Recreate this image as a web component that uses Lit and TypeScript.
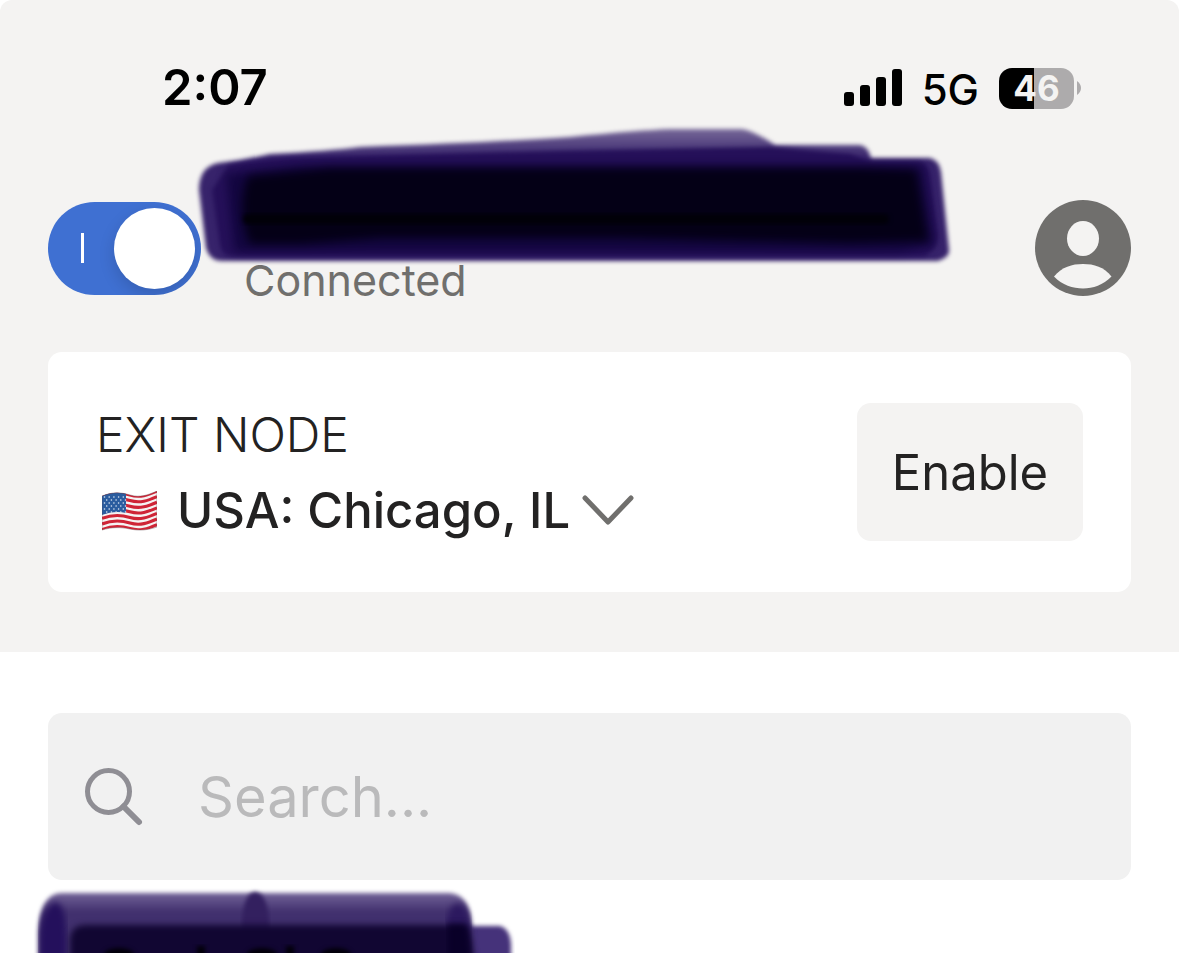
import { LitElement, html, css, svg } from "lit";
import { customElement } from "lit/decorators.js";

/** Status bar: clock, signal, network, battery. */
@customElement("status-bar")
class StatusBar extends LitElement {
  static styles = css`
    :host {
      display: flex;
      align-items: center;
      justify-content: space-between;
      height: 56px;
      padding: 0 98px 0 162px;
      color: #000;
    }
    .time { font-size: 49px; font-weight: 600; line-height: 56px; }
    .right { display: flex; align-items: center; }
    .signal { display: block; margin-right: 20px; }
    .net { font-size: 42px; font-weight: 500; line-height: 56px; margin-right: 20px; padding-top: 4px; }
    .battery { display: flex; align-items: center; gap: 3px; }
    .cell {
      width: 75px;
      height: 41px;
      border-radius: 13px;
      background: linear-gradient(to right, #000 47%, #adabac 47%);
      color: #f4f3f2;
      font-size: 35px;
      font-weight: 700;
      line-height: 41px;
      text-align: center;
    }
    .tip { display: block; }
  `;
  render() {
    return html`
      <span class="time">2:07</span>
      <div class="right">
        <svg class="signal" width="58" height="38" viewBox="0 0 58 38" aria-label="Signal">
          <rect x="0" y="23" width="10" height="14" rx="3"></rect>
          <rect x="16" y="16" width="10" height="21" rx="3"></rect>
          <rect x="32" y="8" width="10" height="29" rx="3"></rect>
          <rect x="48" y="0" width="10" height="37" rx="3"></rect>
        </svg>
        <span class="net">5G</span>
        <div class="battery">
          <div class="cell">46</div>
          <svg class="tip" width="4" height="14" viewBox="0 0 4 14"><path d="M0 0Q4 3 4 7T0 14Z" fill="#adabac"></path></svg>
        </div>
      </div>
    `;
  }
}

const stripes = [0, 1, 2, 3, 4, 5, 6];
const starRows = [0, 1, 2, 3, 4, 5];
const starCols = [0, 1, 2, 3, 4];

@customElement("app-root")
class AppRoot extends LitElement {
  static styles = css`
    :host {
      display: block;
      min-height: 100vh;
      background: #fff;
      color: #232222;
      font-family: Inter, "Liberation Sans", sans-serif;
    }
    * { box-sizing: border-box; }
    .header {
      background: #f4f3f2;
      border-radius: 12px 12px 0 0;
      padding: 60px 48px;
    }
    .status { margin: 0 -48px; }
    .account {
      position: relative;
      display: flex;
      align-items: center;
      gap: 43px;
      margin-top: 84px;
      height: 96px;
    }
    .toggle {
      appearance: none;
      flex: none;
      display: flex;
      align-items: center;
      justify-content: space-between;
      width: 153px;
      height: 93px;
      margin: 0;
      padding: 0 6px 0 33px;
      border-radius: 47px;
      background: #3f70d2;
      overflow: hidden;
    }
    .toggle::before { content: ""; width: 3px; height: 30px; background: #fff; }
    .toggle::after {
      content: "";
      width: 81px;
      height: 81px;
      border-radius: 50%;
      background: #fff;
      box-shadow: 0 6px 16px rgba(0, 0, 0, 0.15);
    }
    .state {
      flex: 1;
      align-self: flex-end;
      font-size: 43px;
      line-height: 48px;
      color: #706f6d;
      margin-bottom: -8px;
    }
    .scribble { position: absolute; left: 142px; top: -80px; }
    .avatar {
      flex: none;
      display: block;
      padding: 0;
      border: 0;
      background: none;
    }
    .avatar svg { display: block; }
    .card {
      display: flex;
      align-items: center;
      justify-content: space-between;
      margin-top: 56px;
      padding: 51px 48px;
      border-radius: 14px;
      background: #fff;
    }
    .title { display: block; font-size: 48px; font-weight: 300; line-height: 64px; }
    .picker { display: flex; align-items: center; height: 74px; padding-top: 13px; }
    .flag { display: block; margin: 0 20px 0 6px; }
    .location {
      appearance: none;
      margin: 0;
      padding: 0;
      border: 0;
      background: none;
      color: inherit;
      font-family: inherit;
      font-size: 49px;
      font-weight: 500;
      line-height: 61px;
    }
    .chevron { display: block; margin-left: 11px; pointer-events: none; }
    .enable {
      width: 226px;
      height: 138px;
      padding: 0;
      border: 0;
      border-radius: 14px;
      background: #f4f3f2;
      color: inherit;
      font-family: inherit;
      font-size: 49px;
    }
    .main { padding: 61px 48px 0; }
    .search {
      display: flex;
      align-items: center;
      gap: 54px;
      height: 167px;
      padding: 0 36px;
      border-radius: 14px;
      background: #f1f1f1;
    }
    .search svg { display: block; flex: none; }
    .query {
      flex: 1;
      min-width: 0;
      padding: 0;
      border: 0;
      outline: 0;
      background: none;
      font-family: inherit;
      font-size: 56px;
      line-height: 72px;
      color: inherit;
    }
    .query::placeholder { color: #bababb; opacity: 1; }
    .list { display: flex; height: 73px; margin: 0 -48px; overflow: hidden; }
    .list svg { display: block; flex: none; }
  `;

  private flag() {
    return svg`
      <defs>
        <clipPath id="fc"><path d="M0 5C10 1 18 1 28 4S46 4 55 0V36C46 39 38 40 28 38S10 36 0 39Z"></path></clipPath>
      </defs>
      <g clip-path="url(#fc)">
        <rect width="55" height="40" fill="#f5f2f2"></rect>
        ${stripes.map((i) => svg`<path d="M0 ${4 + i * 5.6}C10 ${i * 5.6} 18 ${i * 5.6} 28 ${3 + i * 5.6}S46 ${3 + i * 5.6} 55 ${i * 5.6 - 1}" transform="translate(0 1)" fill="none" stroke="#cf2436" stroke-width="3.1"></path>`)}
        <path d="M0 0H24V22C16 20 8 21 0 24Z" fill="#2a5c9f"></path>
        ${starRows.map((r) => starCols.map((c) => svg`<circle cx="${2.5 + c * 4.7 + (r % 2) * 2.2}" cy="${6 + r * 3}" r="0.8" fill="#dfe8f4"></circle>`))}
      </g>
      <path d="M0 5C10 1 18 1 28 4S46 4 55 0V36C46 39 38 40 28 38S10 36 0 39Z" fill="none" stroke="#5d4048" stroke-opacity="0.4"></path>
    `;
  }

  render() {
    return html`
      <header class="header">
        <status-bar class="status"></status-bar>
        <div class="account">
          <input class="toggle" type="checkbox" checked aria-label="VPN connection" />
          <div class="state">Connected</div>
          <button class="avatar" aria-label="Account">
            <svg width="96" height="96" viewBox="0 0 96 96">
              <circle cx="48" cy="48" r="48" fill="#706f6d"></circle>
              <ellipse cx="48" cy="38.500" rx="16" ry="17.500" fill="#f4f3f2"></ellipse>
              <path d="M19 76.500C27 67 37 64 48 64S69 67 76.500 76.500C68 85 58 88.500 48 88.500S27 85 19 76.500Z" fill="#f4f3f2"></path>
            </svg>
          </button>
          <svg class="scribble" width="770" height="160" viewBox="190 120 770 160" aria-label="Hidden account name">
            <defs>
              <filter id="b2" x="-5%" y="-20%" width="110%" height="140%" color-interpolation-filters="sRGB"><feGaussianBlur stdDeviation="2"></feGaussianBlur></filter>
              <filter id="b5" x="-5%" y="-20%" width="110%" height="140%" color-interpolation-filters="sRGB"><feGaussianBlur stdDeviation="5"></feGaussianBlur></filter>
              <linearGradient id="lg" gradientUnits="userSpaceOnUse" x1="0" x2="0" y1="128" y2="158">
                <stop offset="0" stop-color="#7a6c9b"></stop><stop offset="1" stop-color="#37236b"></stop>
              </linearGradient>
            </defs>
            <path filter="url(#b2)" fill="url(#lg)" d="M218 163Q245 160 270 154Q330 151 360 147Q500 142 570 137Q640 130 670 129H742Q752 130 775 145H860Q868 146 871 158H930Q939 160 941 172L949 250Q950 257 938 261H222Q210 261 206 248L199 190Q199 167 218 163Z"></path>
            <path filter="url(#b2)" fill="#251059" d="M228 166Q260 158 320 157L560 151L770 147L850 154L872 162H920Q928 164 930 174L938 235Q938 248 925 256H232Q222 256 220 245L212 190Z"></path>
            <path filter="url(#b5)" fill="#130640" d="M226 174L300 166H860L922 166L934 245L900 252H234Z"></path>
            <path filter="url(#b5)" fill="#040016" d="M248 176L330 168H860L916 170L928 241L850 243L620 238H380L300 244H250Q236 210 248 176Z"></path>
            <rect x="243" y="214" width="646" height="10" rx="5" filter="url(#b2)" fill="#010008"></rect>
          </svg>
        </div>
        <section class="card">
          <div>
            <label class="title" for="location">EXIT NODE</label>
            <div class="picker">
              <svg class="flag" width="55" height="40" viewBox="0 0 55 40" aria-hidden="true">${this.flag()}</svg>
              <select class="location" id="location"><option>USA: Chicago, IL</option></select>
              <svg class="chevron" width="52" height="32" viewBox="0 0 52 32" aria-hidden="true">
                <path d="M3 3L26 27L49 3" fill="none" stroke="#706f6d" stroke-width="5" stroke-linecap="round" stroke-linejoin="round"></path>
              </svg>
            </div>
          </div>
          <button class="enable">Enable</button>
        </section>
      </header>
      <main class="main">
        <div class="search">
          <svg width="60" height="60" viewBox="0 0 60 60" aria-hidden="true" fill="none" stroke="#8f8e94">
            <circle cx="24.500" cy="24.500" r="21" stroke-width="5"></circle>
            <path d="M39.500 39.500L55 55" stroke-width="6" stroke-linecap="round"></path>
          </svg>
          <input class="query" type="text" placeholder="Search..." aria-label="Search" />
        </div>
        <div class="list">
          <svg width="560" height="73" viewBox="0 880 560 73" aria-label="Hidden device name">
            <defs>
              <filter id="c2" x="-5%" y="-10%" width="110%" height="120%" color-interpolation-filters="sRGB"><feGaussianBlur stdDeviation="2"></feGaussianBlur></filter>
              <filter id="c4" x="-5%" y="-20%" width="110%" height="140%" color-interpolation-filters="sRGB"><feGaussianBlur stdDeviation="3"></feGaussianBlur></filter>
              <linearGradient id="lh" gradientUnits="userSpaceOnUse" x1="0" x2="0" y1="892" y2="912">
                <stop offset="0" stop-color="#75669a"></stop><stop offset="1" stop-color="#41306e"></stop>
              </linearGradient>
            </defs>
            <path filter="url(#c2)" fill="#45327a" d="M440 926H500Q510 929 511 944V1000H440Z"></path>
            <path filter="url(#c2)" fill="url(#lh)" d="M38 1000V932Q40 893 62 893H450Q470 895 472 925L476 1000Z"></path>
            <path filter="url(#c4)" fill="#24105c" d="M40 1000V935Q42 908 56 902Q66 906 66 935V1000Z"></path>
            <path filter="url(#c2)" fill="#33205f" d="M242 1000V920Q244 893 255 892Q267 893 269 920V1000Z"></path>
            <path filter="url(#c4)" fill="#2c195f" d="M447 1000V920Q450 902 460 904Q468 908 470 930V1000Z"></path>
            <path filter="url(#c4)" fill="#110632" d="M70 1000V938Q72 925 86 925H466Q474 930 475 1000Z"></path>
            <path filter="url(#c4)" fill="#090028" d="M448 1000V925H466L474 1000Z"></path>
            <g filter="url(#c2)" fill="#020009">
              <ellipse cx="119" cy="955" rx="15" ry="7"></ellipse>
              <rect x="197" y="946" width="8" height="12"></rect>
              <ellipse cx="262" cy="955" rx="15" ry="7"></ellipse>
              <rect x="286" y="946" width="8" height="12"></rect>
              <ellipse cx="336" cy="955" rx="15" ry="7"></ellipse>
            </g>
          </svg>
        </div>
      </main>
    `;
  }
}
